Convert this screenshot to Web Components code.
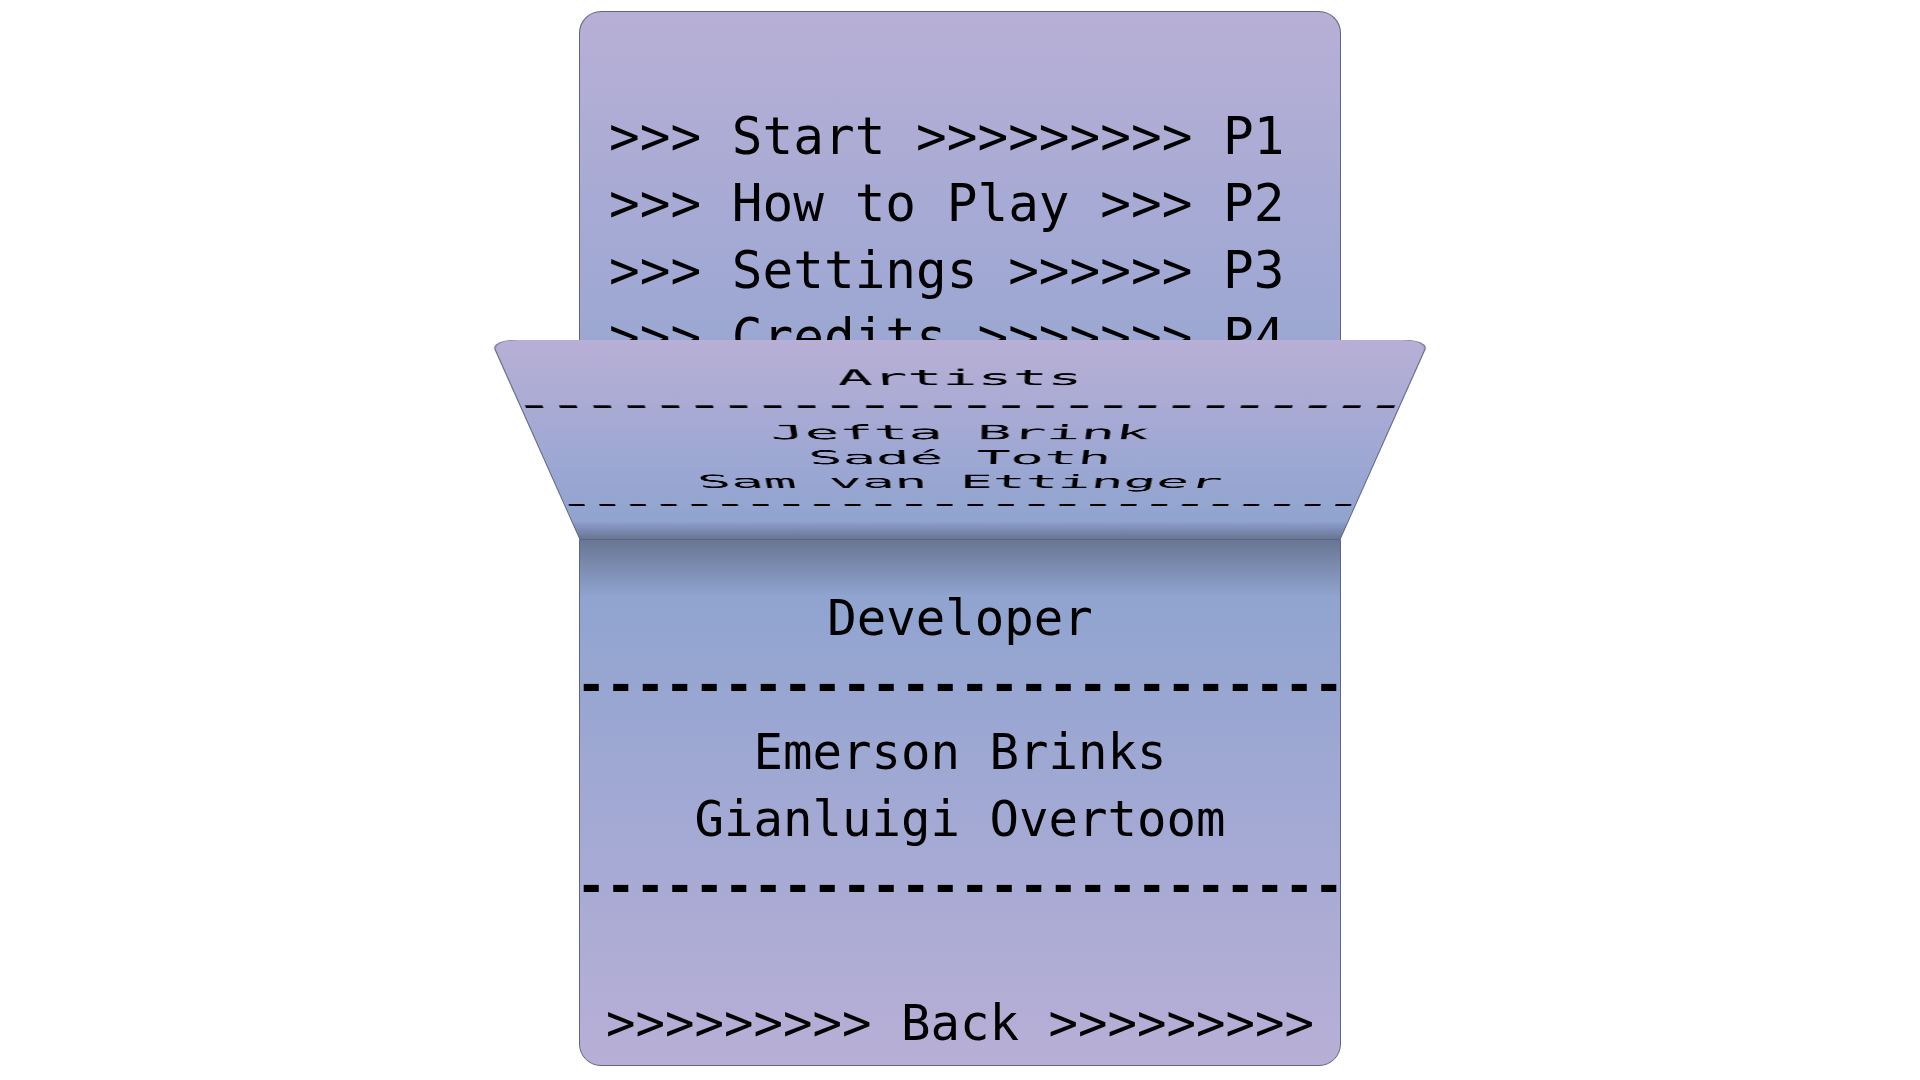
<!DOCTYPE html>
<html lang="en">
<head>
<meta charset="utf-8">
<title>Menu booklet</title>
<style>
  body { margin: 0; background: #fff; color: #000; font-family: Consolas, "DejaVu Sans Mono", monospace; }
</style>
</head>
<body>
<menu-booklet>
  <menu-entry slot="menu">&gt;&gt;&gt; Start &gt;&gt;&gt;&gt;&gt;&gt;&gt;&gt;&gt; P1</menu-entry>
  <menu-entry slot="menu">&gt;&gt;&gt; How to Play &gt;&gt;&gt; P2</menu-entry>
  <menu-entry slot="menu">&gt;&gt;&gt; Settings &gt;&gt;&gt;&gt;&gt;&gt; P3</menu-entry>
  <menu-entry slot="menu">&gt;&gt;&gt; Credits &gt;&gt;&gt;&gt;&gt;&gt;&gt; P4</menu-entry>
  <credit-group slot="flap" heading="Artists">
    <credit-name>Jefta Brink</credit-name>
    <credit-name>Sadé Toth</credit-name>
    <credit-name>Sam van Ettinger</credit-name>
  </credit-group>
  <credit-group slot="page" heading="Developer">
    <credit-name>Emerson Brinks</credit-name>
    <credit-name>Gianluigi Overtoom</credit-name>
  </credit-group>
  <menu-entry slot="back">&gt;&gt;&gt;&gt;&gt;&gt;&gt;&gt;&gt; Back &gt;&gt;&gt;&gt;&gt;&gt;&gt;&gt;&gt;</menu-entry>
</menu-booklet>
<script>
function define(name, html, setup) {
  const template = document.createElement('template');
  template.innerHTML = html;
  customElements.define(name, class extends HTMLElement {
    constructor() {
      super();
      this.attachShadow({ mode: 'open' }).append(template.content.cloneNode(true));
    }
    connectedCallback() { if (setup) setup(this, this.shadowRoot); }
  });
}

define('menu-entry', `
  <style>
    :host { display: block; }
    button {
      display: block; width: 100%; margin: 0; padding: 0; border: 0;
      background: none; color: inherit; font: inherit; text-align: inherit;
      white-space: nowrap; cursor: pointer;
    }
  </style>
  <button type="button"><slot></slot></button>`);

define('credit-name', `
  <style>:host { display: block; white-space: nowrap; font-size: var(--name-size, inherit); }</style>
  <slot></slot>`);

define('credit-group', `
  <style>
    :host { display: flex; flex-direction: column; align-items: center; }
    h2 { margin: 0; font: inherit; }
    .rule { white-space: nowrap; font-weight: bold; }
  </style>
  <h2></h2>
  <div class="rule">--------------------------</div>
  <slot></slot>
  <div class="rule">--------------------------</div>`,
  (host, root) => { root.querySelector('h2').textContent = host.getAttribute('heading'); });

define('menu-booklet', `
  <style>
    :host {
      --line: #5d6684; --lilac: #b8afd6; --mid: #9fa8d3; --blue: #8fa4cf; --fold: #697693;
      display: flex; justify-content: center; box-sizing: border-box;
      min-height: 100vh; padding: 11px 0 14px;
    }
    .book {
      display: grid; grid-template-columns: 100%; grid-template-rows: 1fr 1fr;
      width: min(762px, 100%);
    }
    .top { position: relative; perspective: 2654px; perspective-origin: 50% 100%; }
    .sheet {
      box-sizing: border-box; height: 100%; border: 1px solid var(--line);
      display: flex; flex-direction: column;
    }
    .index, .flap { border-bottom: 0; border-radius: 22px 22px 0 0; }
    .index {
      padding: 91px 29px 0; font-size: 51px; line-height: 67px;
      background: linear-gradient(var(--lilac), var(--mid) 54%, var(--blue) 90%);
    }
    .flap, .page { font-size: 49px; line-height: 67px; text-align: center; }
    .flap {
      --name-size: 51px;
      position: absolute; inset: 0; padding-top: 51px;
      transform-origin: 50% 100%; transform: rotateX(-72.2deg);
      background:
        linear-gradient(to top, var(--fold), #8797c4 45px, transparent 56px),
        linear-gradient(var(--lilac), var(--mid) 50%, var(--blue) 90%);
    }
    .page {
      padding: 45px 0 8px; border-radius: 0 0 22px 22px;
      background:
        linear-gradient(var(--fold), transparent 56px),
        linear-gradient(var(--blue) 10%, var(--mid) 45%, var(--lilac));
    }
    .back { margin-top: auto; }
  </style>
  <main class="book">
    <div class="top">
      <nav class="sheet index"><slot name="menu"></slot></nav>
      <section class="sheet flap"><slot name="flap"></slot></section>
    </div>
    <section class="sheet page">
      <slot name="page"></slot>
      <div class="back"><slot name="back"></slot></div>
    </section>
  </main>`);
</script>
</body>
</html>
